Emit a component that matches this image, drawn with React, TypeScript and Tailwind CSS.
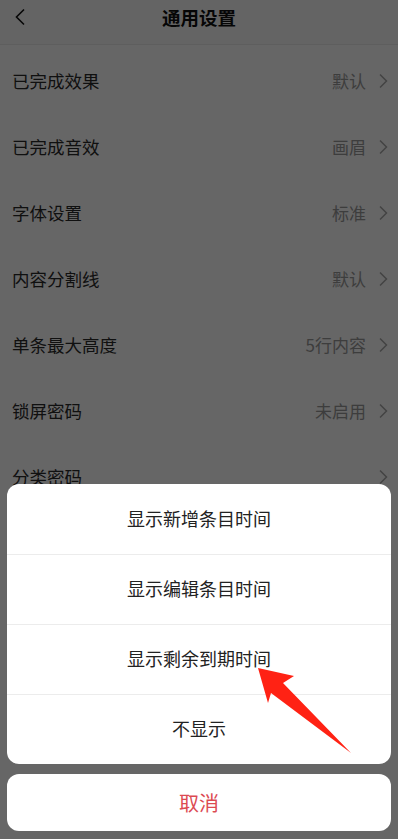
import React from "react";

const rows: [string, string][] = [
  ["已完成效果", "默认"],
  ["已完成音效", "画眉"],
  ["字体设置", "标准"],
  ["内容分割线", "默认"],
  ["单条最大高度", "5行内容"],
  ["锁屏密码", "未启用"],
  ["分类密码", ""],
  ["更多设置", ""],
];

const options = ["显示新增条目时间", "显示编辑条目时间", "显示剩余到期时间", "不显示"];

function Chevron() {
  return (
    <svg width="9" height="16" viewBox="0 0 9 16" className="ml-[13px]">
      <path d="M1 1.5 L7.5 8 L1 14.5" fill="none" stroke="#a8a8a8" strokeWidth="1.5" />
    </svg>
  );
}

export default function App() {
  return (
    <div
      className="relative w-[398px] h-[839px] overflow-hidden bg-white"
      style={{ fontFamily: '"Noto Sans CJK SC", "Noto Sans", sans-serif' }}
    >
      <div className="flex flex-col">
        <div className="relative h-[45px] flex items-center justify-center border-b border-[#ececec] bg-[#fafafa]">
          <svg width="12" height="18" viewBox="0 0 12 18" className="absolute left-[14px] top-[8px]">
            <path d="M10 1.5 L2.5 9 L10 16.5" fill="none" stroke="#111" strokeWidth="1.6" />
          </svg>
          <span className="text-[18.5px] font-bold text-[#111] leading-none -mt-[9px]">通用设置</span>
        </div>
        <div className="flex flex-col pt-[3px]">
          {rows.map(([l, v]) => (
            <div key={l} className="h-[66px] flex items-center pl-[12px] pr-[10px]">
              <span className="text-[17.5px] text-[#2a2a2a]">{l}</span>
              <span className="ml-auto text-[17px] text-[#999]">{v}</span>
              <Chevron />
            </div>
          ))}
        </div>
      </div>

      <div className="absolute inset-0 bg-black/60 flex flex-col justify-end px-[7px] pb-[8px]">
        <div className="bg-white rounded-[12px] flex flex-col">
          {options.map((o, i) => (
            <div
              key={o}
              className={
                "h-[70px] flex items-center justify-center text-[18px] text-[#222] " +
                (i > 0 ? "border-t border-[#ececec]" : "")
              }
            >
              <span className="-mt-[2px]">{o}</span>
            </div>
          ))}
        </div>
        <div className="mt-[10px] h-[57px] bg-white rounded-[12px] flex items-center justify-center text-[20px] text-[#dc4a52]">
          取消
        </div>
      </div>

      <svg className="absolute left-0 top-0" width="398" height="839" viewBox="0 0 398 839">
        <polygon
          points="258,668 294,676 283,683 351,753 271,693 268,703"
          fill="#ff2214"
        />
      </svg>
    </div>
  );
}
